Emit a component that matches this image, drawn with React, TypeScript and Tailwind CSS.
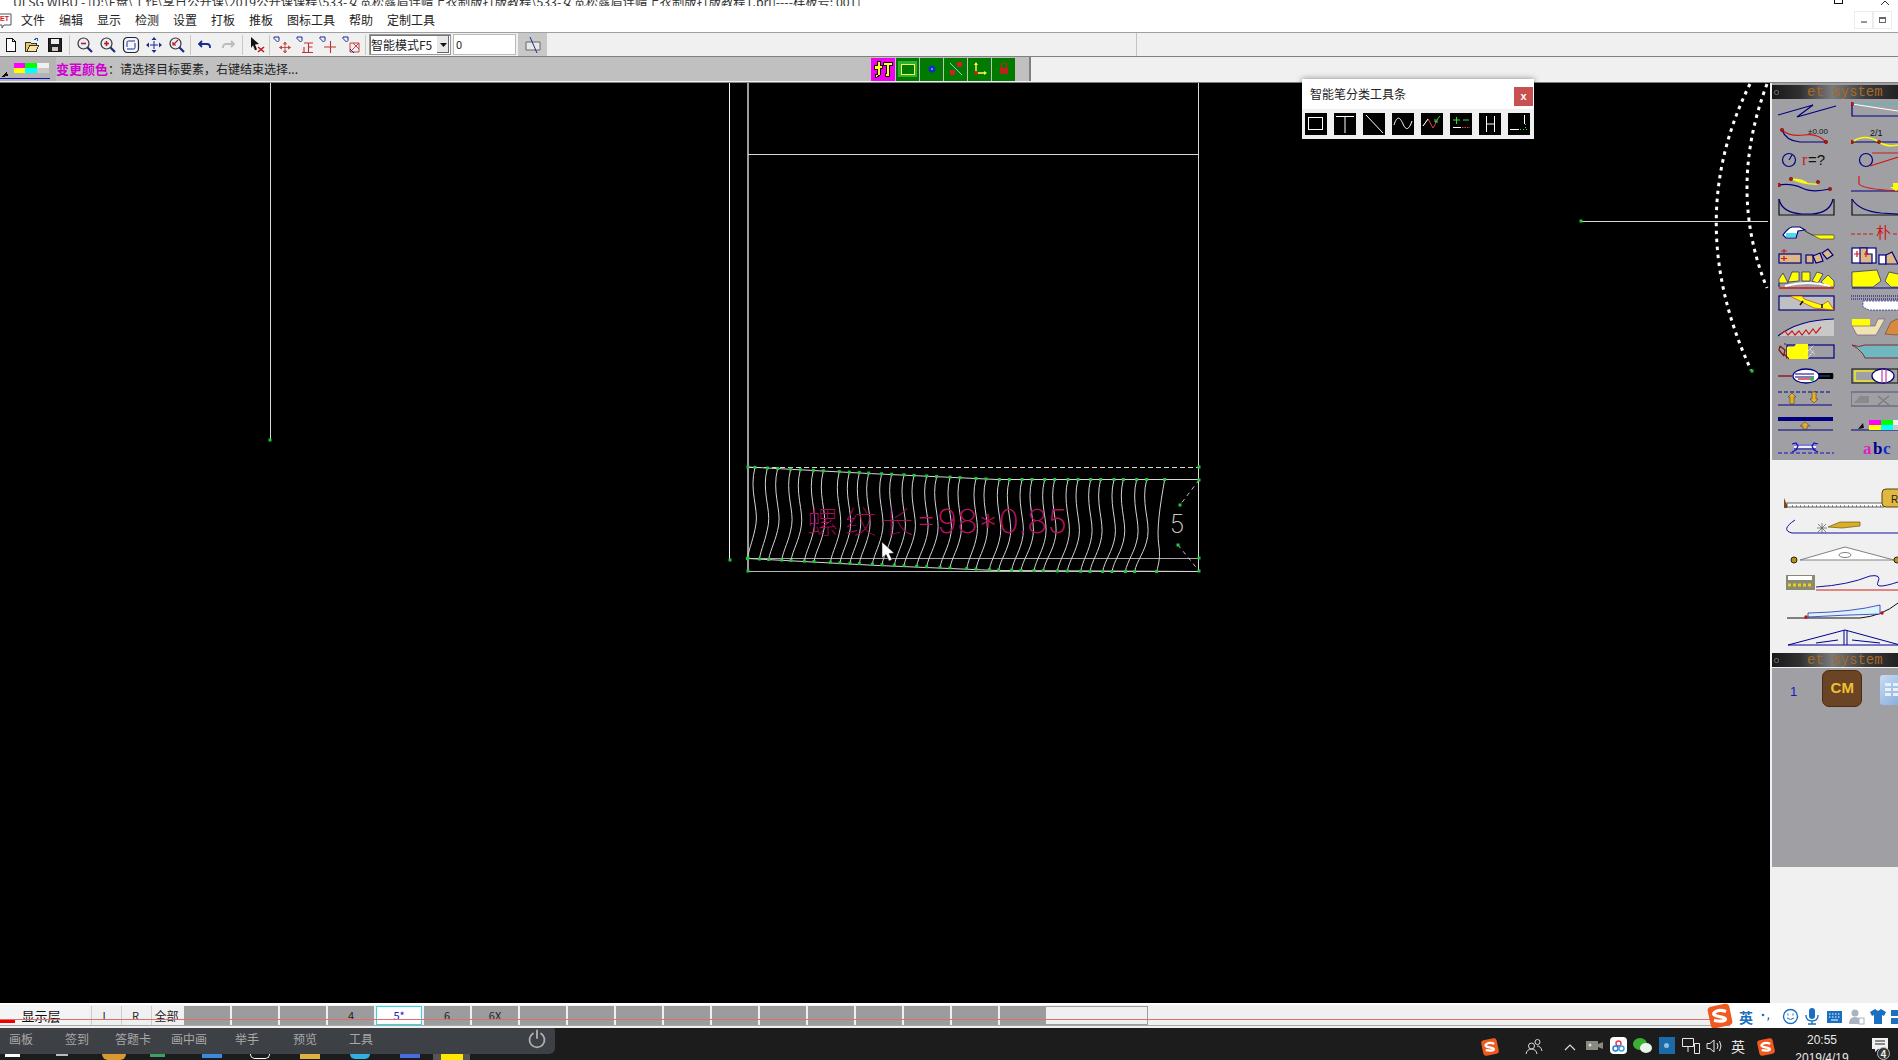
import type { ReactNode } from "react";

const cjk = { fontFamily: '"Noto Sans CJK SC", "Liberation Sans", sans-serif' };

const menus = [
  { label: "文件", w: "w-[38px]" },
  { label: "编辑", w: "w-[38px]" },
  { label: "显示", w: "w-[38px]" },
  { label: "检测", w: "w-[38px]" },
  { label: "设置", w: "w-[38px]" },
  { label: "打板", w: "w-[38px]" },
  { label: "推板", w: "w-[38px]" },
  { label: "图标工具", w: "w-[62px]" },
  { label: "帮助", w: "w-[38px]" },
  { label: "定制工具", w: "w-[62px]" },
];

const Ico = ({ children, w = 16, h = 16 }: { children: ReactNode; w?: number; h?: number }) => (
  <svg width={w} height={h} viewBox={`0 0 ${w} ${h}`} fill="none" shapeRendering="crispEdges">
    {children}
  </svg>
);

const Sep = ({ className = "mx-[3px]" }: { className?: string }) => <div className={`h-[20px] w-px shrink-0 bg-[#c8c8c8] ${className}`} />;

const Btn = ({ children, className = "w-[23px]" }: { children: ReactNode; className?: string }) => (
  <div className={`flex h-full shrink-0 items-center justify-center ${className}`}>{children}</div>
);

const Mag = ({ mark }: { mark: ReactNode }) => (
  <svg width="18" height="18" viewBox="0 0 18 18" fill="none">
    <circle cx="7.5" cy="7.5" r="5.5" stroke="#333" strokeWidth="1.2" fill="#e8eef8" />
    <path d="M11.5 11.5 L16 16" stroke="#1a2a80" strokeWidth="2.2" />
    {mark}
  </svg>
);

const Snap = ({ children }: { children: ReactNode }) => (
  <svg width="18" height="18" viewBox="0 0 18 18" fill="none">
    <path d="M1 1h5v3.5l-1.5 1.5L1 2.5z" stroke="#1a2a90" strokeWidth="1" />
    {children}
  </svg>
);

const Toolbar = () => (
  <div className="flex h-[23px] items-center bg-[#f0f0f0]" style={cjk}>
    <div className="flex h-full w-[1137px] items-center border-r border-[#c4c4c4]">
      <Btn className="w-[21px]">
        <Ico><path d="M3.5 1.5h6l3 3v10h-9z" fill="#fff" stroke="#111" /><path d="M9.5 1.5v3h3" stroke="#111" /></Ico>
      </Btn>
      <Btn className="w-[22px]">
        <Ico>
          <path d="M1 5h5l1 1h5v8H1z" fill="#e8c860" stroke="#333" />
          <path d="M3 14l3-6h9l-3 6z" fill="#f8e8a0" stroke="#333" />
          <path d="M10 3l3-2 1 3" stroke="#1a5fb0" />
        </Ico>
      </Btn>
      <Btn className="w-[23px]">
        <Ico>
          <rect x="1.5" y="1.5" width="13" height="13" fill="#222" stroke="#111" />
          <rect x="4" y="2" width="8" height="5" fill="#eee" />
          <rect x="5" y="10" width="6" height="4" fill="#ccc" />
        </Ico>
      </Btn>
      <Sep />
      <Btn><Mag mark={<path d="M5 7.5h5" stroke="#c01818" strokeWidth="1.6" />} /></Btn>
      <Btn><Mag mark={<path d="M5 7.5h5M7.5 5v5" stroke="#c01818" strokeWidth="1.6" />} /></Btn>
      <Btn>
        <svg width="18" height="18" viewBox="0 0 18 18" fill="none">
          <rect x="1.5" y="1.5" width="15" height="15" rx="4" stroke="#222" strokeWidth="1.2" fill="#f4f6ff" />
          <path d="M5 11V6.5Q5 5 6.5 5H13M13 7v4.5Q13 13 11.5 13H5" stroke="#1a2a90" strokeWidth="1" />
        </svg>
      </Btn>
      <Btn>
        <svg width="18" height="18" viewBox="0 0 18 18" fill="#1a2a90">
          <path d="M9 1l2.5 3h-5zM9 17l-2.5-3h5zM1 9l3-2.5v5zM17 9l-3 2.5v-5z" />
          <path d="M5 8.5h8v1H5zM8.5 5h1v8h-1z" />
        </svg>
      </Btn>
      <Btn>
        <Mag mark={<path d="M10 4L5 9M5 6v3h3" stroke="#c01818" strokeWidth="1.2" />} />
      </Btn>
      <Sep className="mx-[2px]" />
      <Btn>
        <svg width="14" height="12" viewBox="0 0 14 12" fill="none">
          <path d="M4 2L1 5l3 3" stroke="#1a2a90" strokeWidth="1.8" />
          <path d="M1.5 5H9a3 3 0 0 1 3 3v1" stroke="#1a2a90" strokeWidth="1.8" />
        </svg>
      </Btn>
      <Btn>
        <svg width="14" height="12" viewBox="0 0 14 12" fill="none">
          <path d="M10 2l3 3-3 3" stroke="#bcbcbc" strokeWidth="1.8" />
          <path d="M12.5 5H5a3 3 0 0 0-3 3v1" stroke="#bcbcbc" strokeWidth="1.8" />
        </svg>
      </Btn>
      <Sep className="mx-[3px]" />
      <Btn>
        <svg width="18" height="18" viewBox="0 0 18 18">
          <path d="M2 1l8 7-4 .5 2 5-2 .8-2-5L2 12z" fill="#111" />
          <path d="M9 11l6 5M15 11l-6 5" stroke="#c01818" strokeWidth="1.6" />
        </svg>
      </Btn>
      <Sep className="mx-0" />
      <Btn>
        <Snap><path d="M12 6v11M6.500 11.500h11M12 6l-1.500 2h3zM12 17l-1.500-2h3zM6.500 11.500l2-1.500v3zM17.500 11.500l-2-1.500v3z" stroke="#c03030" strokeWidth="0.8" /></Snap>
      </Btn>
      <Btn>
        <Snap><path d="M8 7h9M12.500 7v9M12.500 11h4M8 11v5M6 16.500h11" stroke="#c03030" strokeWidth="1.1" /></Snap>
      </Btn>
      <Btn>
        <Snap><path d="M11.500 5v12M5 11h12" stroke="#c03030" strokeWidth="1.1" /></Snap>
      </Btn>
      <Btn>
        <Snap><path d="M8 7h9v9H8zM8 16l9-9M11 7l6 6" stroke="#c03030" strokeWidth="0.9" /><path d="M8 13l4 4" stroke="#1a2a90" /></Snap>
      </Btn>
      <Sep className="mx-[3px]" />
      <div className="flex h-[21px] w-[82px] shrink-0 items-center justify-between border border-[#9a9a9a] bg-white pl-px pr-px shadow-[inset_1px_1px_0_#777]">
        <span className="whitespace-nowrap text-[12px] leading-none text-[#222]">智能模式F5</span>
        <span className="flex h-[17px] w-[12px] items-center justify-center bg-[#e8e8e8] shadow-[inset_-1px_-1px_0_#666]">
          <svg width="7" height="4" viewBox="0 0 7 4"><path d="M0 0h7L3.500 4z" fill="#111" /></svg>
        </span>
      </div>
      <div className="ml-[2px] flex h-[21px] w-[63px] shrink-0 items-center border border-[#bbb] bg-white pl-[2px] text-[11px] text-[#222]">0</div>
      <div className="ml-[2px] flex h-full w-[29px] shrink-0 items-center justify-center bg-[#c8c8c8]">
        <svg width="18" height="18" viewBox="0 0 18 18" fill="none">
          <path d="M2 6h14v8H2z" fill="#e8e8e8" stroke="#666" />
          <path d="M6 1l7 16" stroke="#1a2a90" />
        </svg>
      </div>
    </div>
  </div>
);

const StatusBar = () => (
  <div className="flex h-[27px] items-stretch border-y border-[#808080] bg-[#f0f0f0] pb-px" style={cjk}>
    <div className="flex w-[1031px] items-center border-r-2 border-[#808080] bg-[#c0c0c0]">
      <div className="flex h-full w-[56px] shrink-0 items-center bg-[#b4b4b4]">
        <svg width="56" height="23" viewBox="0 0 56 23" shapeRendering="crispEdges">
          <path d="M2 19l5-6 1 5zM0 19h3" fill="#111" />
          <rect x="14" y="5" width="11" height="5" fill="#ff00ff" />
          <rect x="25" y="5" width="12" height="5" fill="#00ff00" />
          <rect x="37" y="5" width="12" height="5" fill="#f0f0f0" />
          <rect x="14" y="10" width="11" height="5" fill="#ffff00" />
          <rect x="25" y="10" width="12" height="5" fill="#00ffff" />
          <rect x="37" y="10" width="12" height="5" fill="#c8c8c8" />
          <rect x="0" y="20" width="50" height="1" fill="#1010c0" />
        </svg>
      </div>
      <span className="text-[13px] font-bold text-[#d000d0]">变更颜色</span>
      <span className="whitespace-nowrap text-[12px] text-[#222]">：请选择目标要素，右键结束选择...</span>
      <div className="ml-auto mr-[14px] flex h-[23px] items-stretch gap-px">
        <div className="flex w-[24px] items-center justify-center bg-[#f000f0]">
          <svg width="20" height="20" viewBox="0 0 20 20" shapeRendering="crispEdges">
            <path d="M1 6h3V2h3v4h2v3H7v7l-3 2H2v-3h2V10H1zM10 3h9v3h-3v11h-4v-3h1V6h-3z" fill="#ffff30" stroke="#111" />
          </svg>
        </div>
        <div className="flex w-[23px] items-center justify-center bg-[#007a00]">
          <div className="flex h-[16px] w-[19px] items-center justify-center bg-[#30b030]">
            <div className="h-[11px] w-[14px] border border-[#ffff40] bg-[#007a00]" />
          </div>
        </div>
        <div className="flex w-[23px] items-center justify-center bg-[#007a00]">
          <svg width="8" height="8" viewBox="0 0 8 8"><circle cx="4" cy="4" r="3.500" fill="#1030c0" /><circle cx="4" cy="4" r="1" fill="#70b0ff" /></svg>
        </div>
        <div className="flex w-[23px] items-center justify-center bg-[#007a00]">
          <svg width="14" height="14" viewBox="0 0 14 14">
            <path d="M1 1l12 12" stroke="#60e0e0" />
            <rect x="8" y="0" width="5" height="5" fill="#d02020" />
            <rect x="1" y="8" width="5" height="5" fill="#d02020" />
          </svg>
        </div>
        <div className="flex w-[23px] items-center justify-center bg-[#007a00]">
          <svg width="14" height="14" viewBox="0 0 14 14">
            <path d="M3 11V3M3 11h8" stroke="#ffff40" strokeWidth="1.400" />
            <path d="M3 0l2 3H1zM14 11l-3 2V9z" fill="#ffff40" />
            <circle cx="3" cy="11" r="2" fill="#c02020" />
          </svg>
        </div>
        <div className="flex w-[23px] items-center justify-center bg-[#007a00]">
          <svg width="10" height="12" viewBox="0 0 10 12">
            <rect x="1" y="5" width="8" height="6" fill="#c02020" />
            <path d="M2.500 5V2.500a2.500 2.500 0 0 1 5 0V5" stroke="#c02020" strokeWidth="1.400" fill="none" />
          </svg>
        </div>
      </div>
    </div>
  </div>
);

const waveTop = [75, 112, 143, 182, 211, 250, 280, 328, 358, 388, 416, 455, 485, 522, 552, 590, 620, 660, 690, 738, 768, 808, 838, 876, 906, 944, 974, 1014, 1044, 1082, 1112, 1152, 1180, 1220, 1250, 1304];
const waveBottom = [52, 88, 116, 155, 183, 223, 252, 301, 330, 360, 388, 427, 456, 493, 522, 560, 590, 630, 660, 710, 738, 778, 806, 845, 873, 912, 940, 982, 1012, 1052, 1080, 1118, 1146, 1186, 1214, 1280];

// zoom crop pixels to full picture pixels
const zx = (v: number) => 730 + v / 3;

const topEdge = (x: number) => {
  if (x < 997) return 467 + (12.500 * (x - 748)) / 249;
  return 479.500;
};
const bottomEdge = (x: number) => {
  if (x < 997) return 558.500 + (11.500 * (x - 748)) / 249;
  return Math.min(571.500, 570 + (1.500 * (x - 997)) / 100);
};

const Dot = ({ x, y }: { x: number; y: number }) => <rect x={x - 1.500} y={y - 1.500} width="3" height="3" fill="#22c83a" />;

const Drawing = () => (
  <svg className="block" width="1770" height="920" viewBox="0 83 1770 920" fill="none">
    <g stroke="#d4dcd4" strokeWidth="1" shapeRendering="crispEdges">
      <path d="M270.500 83V440" />
      <path d="M729.500 83V560" stroke="#f4f4f4" />
      <path d="M748 83V572" stroke="#9c9c9c" strokeWidth="2" />
      <path d="M1198.500 83V572" />
      <path d="M748 154.500H1199" />
      <path d="M748 467.500H1199" strokeDasharray="5 3" />
      <path d="M748 558.500H1199" stroke="#a8a8a8" />
      <path d="M748 571.500H1199" stroke="#b8b8b8" />
      <path d="M1581 221.500H1768" />
    </g>
    <path d="M748 467Q870 474 997 479.500H1199" stroke="#d8d8d8" />
    <path d="M748 558.500Q873 566 997 570.500L1199 571.500" stroke="#d8d8d8" />
    {waveTop.map((t, i) => {
      const tx = zx(t);
      const bx = zx(waveBottom[i]);
      const ty = topEdge(tx);
      const by = bottomEdge(bx);
      const h = by - ty;
      const last = i === waveTop.length - 1;
      const d = last
        ? `M${tx} ${ty}C${tx - 5} ${ty + h * 0.3} ${tx - 8} ${ty + h * 0.55} ${tx - 6} ${ty + h * 0.7}S${bx + 2} ${by - 8} ${bx} ${by}`
        : `M${tx} ${ty}C${tx - 6} ${ty + h * 0.25} ${tx + 3.5} ${ty + h * 0.45} ${tx + 1} ${ty + h * 0.62}S${bx + 2} ${by - h * 0.12} ${bx} ${by}`;
      return <path key={t} d={d} stroke="#d4d4d4" strokeWidth="1" />;
    })}
    <text x="807 845 882" y="533" fill="#a80c58" fontSize="31" style={{ fontFamily: '"Noto Sans CJK SC", sans-serif', fontWeight: 100 }}>螺纹长</text>
    <text x="915" y="533" fill="#b8105f" fontSize="33" textLength="152" lengthAdjust="spacingAndGlyphs" style={{ fontFamily: "Inter, sans-serif", fontWeight: 200 }}>=98*0.85</text>
    <text x="1170" y="533" fill="#c8c8c8" fontSize="25" style={{ fontFamily: "Inter, sans-serif", fontWeight: 200 }}>5</text>
    <path d="M1199 480L1180 505M1178 545L1199 571" stroke="#c0c0c0" strokeDasharray="4 4" />
    <path d="M1750 84Q1682 221 1751 370" stroke="#fff" strokeWidth="3" strokeDasharray="3.500 4.500" />
    <path d="M1767 84Q1727 190 1767 288" stroke="#fff" strokeWidth="3" strokeDasharray="3.500 4.500" />
    {waveTop.map((t) => <Dot key={t} x={zx(t)} y={topEdge(zx(t))} />)}
    {waveBottom.map((b) => <Dot key={b} x={zx(b)} y={bottomEdge(zx(b))} />)}
    <Dot x={270} y={440} />
    <Dot x={730} y={560} />
    <Dot x={748} y={467} />
    <Dot x={748} y={558} />
    <Dot x={748} y={571} />
    <Dot x={1199} y={467} />
    <Dot x={1199} y={480} />
    <Dot x={1199} y={558} />
    <Dot x={1199} y={571} />
    <Dot x={1180} y={505} />
    <Dot x={1178} y={545} />
    <Dot x={1581} y={221} />
    <Dot x={1752} y={371} />
    <path d="M882 542V558L886 554.500 889 561 892 559.500 889 553.500 894 553Z" fill="#fff" stroke="#222" strokeWidth="0.500" />
  </svg>
);

const penIcons: ReactNode[] = [
  <rect key="r" x="3.500" y="4.500" width="14" height="12" stroke="#fff" />,
  <path key="t" d="M2 3.500H20M11 3.500V20" stroke="#fff" />,
  <path key="l" d="M3 2L20 20" stroke="#fff" />,
  <path key="w" d="M2 12C5 2 8 4 11 11S17 17 20 8" stroke="#fff" />,
  <g key="s"><path d="M2 13L7 6 12 15 17 6" stroke="#e04040" /><path d="M2 13L7 6" stroke="#fff" /><path d="M14 9L19 3M14 9h3M14 9V6" stroke="#30e040" /></g>,
  <g key="p"><path d="M3 7h7M6.500 4v7M13 7h6" stroke="#30e040" /><path d="M3 14.500H11" stroke="#fff" /><path d="M12 14.500H20" stroke="#e04040" strokeDasharray="1.500 1" /></g>,
  <path key="h" d="M7.500 3V19M15.500 3V19M7.500 11H15.500" stroke="#fff" />,
  <g key="c"><path d="M2 16.500H11" stroke="#fff" /><path d="M16.500 2V11" stroke="#fff" /><path d="M12 16.500H19M17.500 11V16" stroke="#30e040" strokeDasharray="1 2" /></g>,
];

const PenPalette = () => (
  <div className="absolute left-[1302px] top-[-4px] w-[232px] shadow-[0_0_6px_rgba(0,0,0,0.45)]" style={cjk}>
    <div className="flex h-[30px] items-center justify-between bg-white pl-[8px] pr-px">
      <span className="text-[12px] text-[#222]">智能笔分类工具条</span>
      <span className="mt-[4px] flex h-[19px] w-[19px] items-center justify-center bg-[#c75050] text-[11px] font-bold leading-none text-white" style={{ fontFamily: '"Liberation Sans", sans-serif' }}>x</span>
    </div>
    <div className="flex h-[30px] items-center gap-[7px] bg-[#f0f0f0] pl-[3px]">
      {penIcons.map((icon, i) => (
        <div key={i} className="h-[22px] w-[22px] bg-black">
          <svg width="22" height="22" viewBox="0 0 22 22" fill="none">{icon}</svg>
        </div>
      ))}
    </div>
  </div>
);

const N = "#000080";
const R = "#d01818";
const Y = "#ffff00";
const TAN = "#deb887";
const RDot = ({ x, y }: { x: number; y: number }) => <circle cx={x} cy={y} r="1.700" fill="#c01010" stroke="#600" strokeWidth="0.500" />;

// one pair per row, left column then the right column that runs off the panel
const rows: [ReactNode, ReactNode][] = [
  [
    <path d="M0 14L35 4 19 16 58 5" stroke={N} />,
    <g><path d="M1 3H60" stroke="#00d8d8" strokeDasharray="4 2" /><path d="M1 3L60 12" stroke="#fff" /><path d="M1 3V15H60" stroke={N} /><RDot x={1} y={3} /></g>,
  ],
  [
    <g><path d="M4 5Q8 16 22 17H48" stroke={N} /><path d="M4 5Q12 12 26 10T48 17" stroke={R} /><RDot x={4} y={5} /><RDot x={48} y={17} /><text x="30" y="9" fontSize="8" fill="#111" style={{ fontFamily: '"Liberation Sans", sans-serif' }}>±0.00</text></g>,
    <g><path d="M1 17H60" stroke={N} /><path d="M1 17Q14 8 28 17T60 14" stroke={Y} strokeWidth="1.500" /><RDot x={1} y={17} /><RDot x={28} y={17} /><text x="19" y="11" fontSize="9" fill="#111" style={{ fontFamily: '"Liberation Sans", sans-serif' }}>2/1</text></g>,
  ],
  [
    <g><circle cx="11" cy="11" r="6.500" stroke={N} /><path d="M11 11L14 6" stroke={N} /><text x="24" y="16" fontSize="16" fill={R} style={{ fontFamily: '"Liberation Serif", serif' }}>r</text><text x="30" y="16" fontSize="15" fill="#111" style={{ fontFamily: '"Liberation Sans", sans-serif' }}>=?</text></g>,
    <g><circle cx="15" cy="11" r="6.500" stroke={N} /><path d="M21 4H60M19 17L60 4" stroke={R} /></g>,
  ],
  [
    <g><path d="M0 12Q14 10 24 15T52 16" stroke={N} /><path d="M13 6Q26 6 30 11H40Q28 12 13 6Z" fill={Y} stroke={Y} /><RDot x={1} y={12} /><RDot x={13} y={6} /><RDot x={40} y={9} /><RDot x={52} y={16} /></g>,
    <g><path d="M0 18H60" stroke={N} /><path d="M8 3V11Q12 16 46 18" stroke={R} /><path d="M42 10h6v4h3l-6 4-6-4h3z" fill={Y} /></g>,
  ],
  [
    <g><path d="M1 2V18H56V2" stroke="#111" /><path d="M1 2Q4 16 24 17H34Q52 16 55 2" stroke={N} /></g>,
    <g><path d="M1 2V18H60" stroke="#111" /><path d="M1 2Q8 14 30 16L60 18" stroke={N} /></g>,
  ],
  [
    <g><path d="M5 14Q10 7 14 6H22L27 9 20 10 18 17H8Z" fill="#fff" stroke={N} /><path d="M8 12h10v4H8z" fill="#40e0f0" /><path d="M27 10L34 14H56V18H42Z" fill={Y} stroke="#111" strokeWidth="0.500" /></g>,
    <g><path d="M0 13H60" stroke={R} strokeDasharray="4 2" /><rect x="24" y="2" width="16" height="18" fill="#a0a0a4" /><text x="25" y="17" fontSize="15" fill={R} style={cjk}>朴</text></g>,
  ],
  [
    <g><rect x="1" y="9" width="22" height="9" fill={TAN} stroke={N} /><path d="M6 4v4M3 6h6M6 11v5M3 13.500h6" stroke={R} /><rect x="28" y="10" width="7" height="8" fill={TAN} stroke={N} /><path d="M35 11l7-3 3 8-7 2z" fill={TAN} stroke={N} /><path d="M44 8l6-4 5 6-6 4z" fill={TAN} stroke={N} /></g>,
    <g><rect x="1" y="3" width="24" height="15" fill="#fff" stroke={N} /><path d="M9 3h7v6h5v9H9z" fill={TAN} stroke={N} /><path d="M3 9h6M6 6v6M13 9h5M15 6v6" stroke={R} /><rect x="28" y="10" width="7" height="9" fill="#fff" stroke={N} /><path d="M35 10l6-3 6 12H35z" fill={TAN} stroke={N} /></g>,
  ],
  [
    <g><path d="M1 18V10L5 4 10 14H1zM10 13L14 3H21V12zM24 3H32V12H24zM34 12L39 3 45 5 40 14zM43 13L50 6 56 12V18H50Z" fill={Y} stroke={N} strokeWidth="0.600" /><path d="M7 17Q30 11 52 17" stroke="#fff" strokeWidth="2" /><path d="M1 19H56" stroke={R} strokeWidth="1.500" /></g>,
    <g><path d="M1 3L26 1 30 12 22 18H1ZM34 12L38 3 60 8V18H40Z" fill={Y} stroke={N} strokeWidth="0.600" /><path d="M1 19H60" stroke={N} /></g>,
  ],
  [
    <g><rect x="1" y="3" width="55" height="14" fill="#c0c0c0" stroke={N} /><path d="M12 3L36 15 56 17 50 8 44 12 26 6 24 3Z" fill={Y} stroke="#c02020" strokeWidth="0.600" /><path d="M25 8l-3 4M44 11v4" stroke="#111" strokeWidth="1.500" /></g>,
    <g><path d="M0 3H60" stroke={N} strokeDasharray="1 1" /><path d="M0 6H60" stroke={N} strokeDasharray="1 1" /><path d="M12 8H60V17H18L12 14Z" fill="#fff" stroke={N} strokeDasharray="2 1" strokeWidth="0.600" /></g>,
  ],
  [
    <g><path d="M0 19Q20 3 56 2V19Z" fill="#c8c8c8" /><path d="M0 19Q20 3 56 2" stroke={N} /><path d="M3 17l4-3 3 4 4-4 3 4 4-4 3 4 4-5 3 4 4-5 3 4 5-6" stroke={R} /></g>,
    <g><rect x="1" y="2" width="18" height="7" fill={Y} /><path d="M1 9H24L27 2H34L25 18H6Z" fill="#efe3b0" stroke="#6a4a90" strokeWidth="0.600" /><path d="M34 17L40 5 46 2 60 6V18L52 12 46 18Z" fill="#d88a40" stroke="#6a4020" strokeWidth="0.600" /></g>,
  ],
  [
    <g><rect x="9" y="4" width="47" height="13" stroke={N} /><path d="M9 6H16L18 3H30V18H9Z" fill={Y} /><path d="M2 5l5 4-1 4 5 5M2 5l-1 4 5 6M6 3h2" stroke="#801010" strokeWidth="1.200" /><path d="M26 14l10-10M30 17l6-8M32 8l5 6" stroke="#fff" strokeWidth="1" strokeDasharray="1 1" /></g>,
    <g><path d="M1 4Q8 7 14 4H60V17H14L12 13Q6 6 1 4Z" fill="#70b8c0" stroke="#7a1010" strokeWidth="0.800" /></g>,
  ],
  [
    <g><path d="M0 11H14" stroke="#800000" /><path d="M38 8H55Q56 11 55 14H38Z" fill="#000" /><path d="M38 11H52" stroke="#205080" /><ellipse cx="28" cy="11" rx="13" ry="7" fill="#fff" stroke={N} strokeWidth="1.300" /><path d="M17 9H36M17 12H36" stroke={N} /><path d="M20 14H34" stroke={R} strokeWidth="1.300" /><circle cx="34" cy="14" r="2" fill="#30c040" /></g>,
    <g><rect x="1" y="4" width="46" height="14" fill="#a0a0a4" stroke="#222" /><rect x="4" y="6" width="22" height="10" stroke={Y} /><ellipse cx="32" cy="11" rx="11" ry="7" fill="#fff" stroke={N} strokeWidth="1.300" /><path d="M31 4V18M35 4V18" stroke="#c040a0" /></g>,
  ],
  [
    <g><path d="M0 3H54" stroke={N} strokeDasharray="4 2" /><path d="M0 16H54" stroke={N} /><path d="M14 4l4 4h-2v7h-4V8h-2z" fill="#e8b020" stroke="#333" strokeWidth="0.500" /><path d="M36 14l-4-4h2V3h4v7h2z" fill="#e8b020" stroke="#333" strokeWidth="0.500" /></g>,
    <g><rect x="0" y="3" width="60" height="14" stroke="#606080" /><path d="M3 14L9 7H18V14Z" fill="#8a8a8a" /><path d="M27 7l11 9M38 7L27 16" stroke="#7a7a7a" /><path d="M48 4V16" stroke="#7a7a7a" /></g>,
  ],
  [
    <g><rect x="0" y="4" width="55" height="4" fill={N} /><path d="M0 17H55" stroke={N} /><path d="M27 9l5 4h-3v3h-4v-3h-3z" fill="#e8b020" stroke="#333" strokeWidth="0.500" /></g>,
    <g><path d="M7 16l5-6 1 5zM5 16h5" fill="#111" /><path d="M0 17H60" stroke={N} /><rect x="18" y="7" width="12" height="5" fill="#ff00ff" /><rect x="30" y="7" width="12" height="5" fill="#00ff00" /><rect x="42" y="7" width="12" height="5" fill="#f0f0f0" /><rect x="18" y="12" width="12" height="5" fill="#ffff00" /><rect x="30" y="12" width="12" height="5" fill="#00ffff" /><rect x="42" y="12" width="12" height="5" fill="#c8c8c8" /></g>,
  ],
  [
    <g><path d="M0 16H56" stroke="#1010c0" strokeDasharray="4 2" /><path d="M16 9H38" stroke="#f0f0f0" strokeWidth="4" /><path d="M16 8H38M16 12H38" stroke="#1010c0" /><path d="M14 7l4-1 2 3-2 4-4 2M40 7l-4-1-2 3 2 4 4 2" stroke="#1010c0" /></g>,
    <g style={{ fontFamily: '"Liberation Serif", serif', fontWeight: 700, fontSize: 17 }}><text x="12" y="17" fill="#e020c0">a</text><text x="22" y="17" fill="#000090">b</text><text x="32" y="17" fill="#1030d0">c</text></g>,
  ],
];

const SystemHeader = () => (
  <div className="relative flex h-[14px] items-center bg-[linear-gradient(90deg,#181818_0%,#303030_22%,#7a7a7a_48%,#3a3a3a_75%,#222_100%)] pl-[3px]">
    <span className="h-[3px] w-[3px] rounded-full bg-[#111] ring-1 ring-[#666]" />
    <span className="ml-[29px] text-[14px] leading-none text-[#a86a28]" style={{ fontFamily: '"Liberation Mono", monospace' }}>et system</span>
  </div>
);

const RulerTools = () => (
  <svg className="block" width="126" height="193" viewBox="0 0 126 193" fill="none">
    <g transform="translate(0 -460)">
      <path d="M12 498l3 7v3h-3z" fill="#7a4a20" />
      <rect x="15" y="503" width="97" height="4" fill="#fff" stroke="#222" strokeWidth="0.700" />
      <path d="M20 506H112" stroke="#222" strokeDasharray="1 3" />
      <rect x="110" y="489" width="20" height="18" rx="4" fill="#e0b840" stroke="#5a4010" />
      <text x="119" y="503" fontSize="10" fill="#222" style={{ fontFamily: '"Liberation Sans", sans-serif' }}>R</text>
      <path d="M23 520Q8 530 20 533L32 533H128" stroke="#1010a0" />
      <path d="M56 527L68 522H88V526L70 528Z" fill="#d8b028" stroke="#7a5010" strokeWidth="0.700" />
      <path d="M46 524l8 8M54 524l-8 8M50 523v10M45 528h10" stroke="#555" strokeWidth="0.700" />
      <path d="M28 560L73 547 122 560Z" fill="#fff" stroke="#808080" />
      <ellipse cx="73" cy="555" rx="6" ry="2.500" stroke="#808080" />
      <circle cx="22" cy="560" r="3" fill="#c09010" stroke="#222" />
      <circle cx="125" cy="560" r="3" fill="#c09010" stroke="#222" />
      <rect x="14" y="575" width="29" height="15" fill="#8a8a70" />
      <rect x="16" y="576" width="24" height="4" fill="#fff" />
      <path d="M16 585H40" stroke="#e8d020" strokeWidth="3" strokeDasharray="3 2" />
      <path d="M44 587Q76 585 98 576Q110 574 106 582T126 582" stroke="#1010a0" />
      <path d="M44 590H126" stroke="#d01818" />
      <path d="M15 618H88Q110 616 126 603" stroke="#111" />
      <path d="M36 613Q80 612 108 605V614Q70 615 36 617Z" fill="#d8f4ff" stroke="#1010a0" strokeWidth="0.700" />
      <circle cx="34" cy="617" r="1.700" fill="#c01010" />
      <circle cx="110" cy="613" r="1.700" fill="#c01010" />
      <path d="M16 645L73 630 128 645ZM72 630V645M75 630V645M44 643L66 640M80 640L108 643" stroke="#000090" />
    </g>
  </svg>
);

const RightPanel = () => (
  <div className="flex w-[128px] shrink-0 flex-col overflow-hidden border-l-2 border-[#f0f0f0] bg-[#f0f0f0]">
    <div className="h-[377px] bg-[#a0a0a4] pt-[2px]">
      <SystemHeader />
      <div className="flex flex-col pt-px">
        {rows.map(([a, b], i) => (
          <div key={i} className="flex h-[24px] items-center pl-[6px]">
            <svg className="shrink-0" width="60" height="22" viewBox="0 0 60 22" fill="none" strokeWidth="1.200">{a}</svg>
            <svg className="ml-[13px] shrink-0" width="60" height="22" viewBox="0 0 60 22" fill="none" strokeWidth="1.200">{b}</svg>
          </div>
        ))}
      </div>
    </div>
    <div className="h-[193px]"><RulerTools /></div>
    <SystemHeader />
    <div className="flex h-[200px] items-start border-t border-[#f0f0f0] bg-[#a0a0a4] pl-[18px] pt-[2px]">
      <span className="mt-[15px] text-[13px] leading-none text-[#1818c0]" style={{ fontFamily: '"Liberation Sans", sans-serif' }}>1</span>
      <div className="ml-[25px] flex h-[37px] w-[40px] shrink-0 items-center justify-center rounded-[7px] border border-[#4a2c10] bg-[#6a4424] text-[15px] font-bold text-[#f0c030]" style={{ fontFamily: '"Liberation Sans", sans-serif' }}>CM</div>
      <div className="ml-[18px] mt-[5px] h-[30px] w-[30px] shrink-0 rounded-[3px] bg-[linear-gradient(135deg,#c8dcf4,#7aa4d8)]">
        <div className="ml-[5px] mt-[8px] grid w-[20px] grid-cols-3 gap-[2px]">
          <div className="h-[3px] bg-[#e8f0fa]" /><div className="h-[3px] bg-[#e8f0fa]" /><div className="h-[3px] bg-[#e8a070]" />
          <div className="h-[3px] bg-[#e8f0fa]" /><div className="h-[3px] bg-[#e8f0fa]" /><div className="h-[3px] bg-[#e8f0fa]" />
          <div className="h-[3px] bg-[#e8f0fa]" /><div className="h-[3px] bg-[#e8f0fa]" /><div className="h-[3px] bg-[#e8f0fa]" />
        </div>
      </div>
    </div>
  </div>
);

const layerCells = ["", "", "", "4", "5*", "6", "6X", "", "", "", "", "", "", "", "", "", "", ""];

const BottomBar = () => (
  <div className="relative flex h-[25px] border-t-2 border-white bg-[#f0f0f0] pb-[2px] pt-[1px]" style={cjk}>
    <div className="flex flex-1 items-stretch border-b border-[#a8a8a8]">
      <div className="relative flex w-[89px] items-center justify-center bg-[#f4f4f4] pb-px pr-[7px] text-[13px] leading-none text-[#111]">
        显示层
        <span className="absolute bottom-[2px] left-0 h-[4px] w-[15px] bg-[#f00000]" />
      </div>
      <div className="ml-[2px] flex w-[28px] items-center justify-center border-l border-[#ccc] text-[11px] text-[#222]">L</div>
      <div className="ml-[2px] flex w-[28px] items-center justify-center border-l border-[#ccc] text-[11px] text-[#222]">R</div>
      <div className="ml-[2px] flex w-[30px] items-center justify-center border-l border-[#ccc] text-[12px] text-[#222]">全部</div>
      <div className="ml-[3px] flex gap-[2px]">
        {layerCells.map((c, i) =>
          c === "5*" ? (
            <div key={i} className="flex w-[46px] items-center justify-center border border-[#30d8d8] bg-white text-[11px] text-[#2020c0]">{c}</div>
          ) : (
            <div key={i} className="flex w-[46px] items-center justify-center bg-[#9c9c9c] text-[11px] text-[#222]">{c}</div>
          )
        )}
      </div>
      <div className="w-[102px] border-y border-r border-[#9c9c9c] bg-[#f0f0f0]" />
    </div>
    <div className="absolute inset-x-0 top-[14px] h-px bg-[#d87070]" />
    <SogouBar />
  </div>
);

const SogouS = ({ size }: { size: number }) => (
  <svg width={size} height={size} viewBox="0 0 28 28">
    <rect x="3" y="3" width="22" height="22" rx="4" fill="#f05a1e" transform="rotate(-12 14 14)" />
    <path d="M20 9.500Q13 7 9 10T13 14.500 19 18 8 18.500" stroke="#fff" strokeWidth="3.200" fill="none" />
  </svg>
);

const SogouBar = () => (
  <div className="absolute bottom-[-1px] right-0 top-[-1px] flex w-[168px] items-center bg-white pl-[6px]">
    <div className="absolute left-[-24px] top-[-2px]"><SogouS size={28} /></div>
    <span className="ml-[3px] text-[14px] font-bold leading-none text-[#1a6fc0]">英</span>
    <svg className="ml-[7px] shrink-0" width="12" height="12" viewBox="0 0 12 12" fill="#1a6fc0"><circle cx="3" cy="4" r="1.300" /><path d="M9 6q1 3-2 4 1.500-1.500 .5-3z" /></svg>
    <svg className="ml-[9.500px] shrink-0" width="17" height="17" viewBox="0 0 17 17" fill="none" stroke="#1a6fc0"><circle cx="8.500" cy="8.500" r="7" strokeWidth="1.400" /><path d="M5 10q3.500 3 7 0M6 5.500v2M11 5.500v2" /></svg>
    <svg className="ml-[6.500px] shrink-0" width="14" height="17" viewBox="0 0 14 17" fill="#1a6fc0"><rect x="4" y="0" width="6" height="11" rx="3" /><path d="M1 7q0 6 6 6t6-6M7 13v3M3 16h8" fill="none" stroke="#1a6fc0" strokeWidth="1.400" /></svg>
    <svg className="ml-[6.500px] shrink-0" width="17" height="14" viewBox="0 0 17 14" fill="#1a6fc0"><path d="M1 1h15v12H1z" /><path d="M3 4h1.500M6 4h1.500M9 4h1.500M12 4h1.500M3 7h1.500M6 7h1.500M9 7h1.500M12 7h1.500M5 10h7" stroke="#fff" /></svg>
    <svg className="ml-[6.500px] shrink-0" width="16" height="16" viewBox="0 0 16 16" fill="#a8b4c0"><circle cx="6" cy="4" r="3.500" /><path d="M0 15q0-7 6-7t6 7z" /><rect x="10" y="9" width="5" height="6" fill="#fff" stroke="#a8b4c0" /></svg>
    <svg className="ml-[5px] shrink-0" width="16" height="15" viewBox="0 0 16 15" fill="#1a6fc0"><path d="M5 0L0 3l2 4 2-1v9h8V6l2 1 2-4-5-3-3 2z" /></svg>
    <svg className="ml-[5px] shrink-0" width="8" height="14" viewBox="0 0 8 14" fill="#1a6fc0"><rect width="8" height="6" /><rect y="8" width="8" height="6" /></svg>
  </div>
);

const meetingItems = [
  { label: "画板", w: "w-[56px]" },
  { label: "签到", w: "w-[50px]" },
  { label: "答题卡", w: "w-[56px]" },
  { label: "画中画", w: "w-[64px]" },
  { label: "举手", w: "w-[58px]" },
  { label: "预览", w: "w-[56px]" },
  { label: "工具", w: "w-[30px]" },
];

const MeetingBar = () => (
  <div className="absolute bottom-[6px] left-0 z-10 flex h-[29px] w-[555px] items-center rounded-r-[6px] bg-[#3d4045] pb-[2px] pl-[9px] text-[12px] text-[#a8a8a8]" style={cjk}>
    {meetingItems.map((m) => (
      <span key={m.label} className={`shrink-0 whitespace-nowrap ${m.w}`}>{m.label}</span>
    ))}
    <svg className="absolute left-[527px] top-[4px]" width="20" height="20" viewBox="0 0 20 20" fill="none" stroke="#b0b0b0" strokeWidth="1.800" strokeLinecap="round">
      <path d="M6 4.500a7.500 7.500 0 1 0 8 0M10 1.500V9" />
    </svg>
  </div>
);

const Taskbar = () => (
  <div className="relative h-[32px] overflow-hidden bg-[#1c1c1c] text-[#e8e8e8]" style={cjk}>
    <MeetingBar />
    <div className="absolute bottom-0 left-0 flex h-[6px] items-start">
      <span className="ml-[5px] h-[3px] w-[15px] bg-white" />
      <span className="ml-[36px] h-[2px] w-[12px] bg-[#bbb]" />
      <span className="ml-[34px] h-[6px] w-[24px] rounded-b-[6px] bg-[#d89a30]" />
      <span className="ml-[24px] h-[3px] w-[15px] bg-[#3ca060]" />
      <span className="ml-[37px] h-[4px] w-[20px] bg-[#3a8ae0]" />
      <span className="ml-[28px] h-[5px] w-[20px] rounded-b-full border border-t-0 border-white" />
      <span className="ml-[30px] h-[5px] w-[20px] bg-[#e0b040]" />
      <span className="ml-[30px] h-[5px] w-[20px] rounded-b-full bg-[#30b0e0]" />
      <span className="ml-[30px] h-[4px] w-[20px] bg-[#4a6ae0]" />
      <span className="ml-[13px] flex h-[6px] w-[37px] justify-center bg-[#555]"><span className="h-[6px] w-[22px] bg-[#ffe800]" /></span>
    </div>
    <div className="flex h-full items-start justify-end pt-[9px]">
      <div className="mr-[25px]"><SogouS size={20} /></div>
      <svg className="mr-[21px] mt-[1px]" width="18" height="18" viewBox="0 0 18 18" fill="none" stroke="#ddd"><circle cx="6.500" cy="8" r="3" /><circle cx="12.500" cy="4" r="2.500" /><path d="M1 16q1-5 5.500-5t5.500 5M12 8q4 0 5 5" /></svg>
      <svg className="mr-[10px] mt-[6px]" width="12" height="8" viewBox="0 0 12 8" fill="none" stroke="#ddd" strokeWidth="1.200"><path d="M1 7l5-5 5 5" /></svg>
      <svg className="mr-[7px] mt-[2px]" width="17" height="13" viewBox="0 0 17 13" fill="#8a8a80"><rect x="0" y="2" width="12" height="9" /><path d="M12 5l5-2v7l-5-2z" /><circle cx="4" cy="6" r="1.500" fill="#ddd" /></svg>
      <div className="mr-[6px] flex h-[17px] w-[17px] items-center justify-center rounded-[4px] bg-white">
        <svg width="13" height="12" viewBox="0 0 13 12" fill="none" strokeWidth="1.500"><circle cx="6.500" cy="3.500" r="2.500" stroke="#e04060" /><circle cx="3.500" cy="8.500" r="2.500" stroke="#2080e0" /><circle cx="9.500" cy="8.500" r="2.500" stroke="#40a0e0" /></svg>
      </div>
      <svg className="mr-[6.500px] mt-px" width="19" height="16" viewBox="0 0 19 16" fill="#3cb034"><ellipse cx="7" cy="6" rx="7" ry="6" /><ellipse cx="13" cy="10" rx="6" ry="5" fill="#e8f4e8" /></svg>
      <div className="mr-[7px] flex h-[17px] w-[16px] items-center justify-center bg-[#1c6aa8]"><span className="h-[5px] w-[5px] rounded-full bg-[#8ac0e8]" /></div>
      <svg className="mr-[6px] mt-[1px]" width="18" height="16" viewBox="0 0 18 16" fill="none" stroke="#e8e8e8"><path d="M.5.500h11v8H.5zM6 8.500V14M12.500 5.500h5v10h-5z" /></svg>
      <svg className="mr-[8.500px] mt-[1px]" width="17" height="16" viewBox="0 0 17 16" fill="none" stroke="#e8e8e8"><path d="M1 5.500h3L8 2v12l-4-3.500H1zM11 5q2 3 0 6M13.500 3q3 5 0 10" /></svg>
      <span className="mr-[11px] text-[14px] leading-[18px]">英</span>
      <div className="mr-[11px]"><SogouS size={20} /></div>
      <div className="mr-[15px] -mt-[6px] flex w-[70px] flex-col items-center text-[12px] leading-[18px]" style={{ fontFamily: '"Liberation Sans", sans-serif' }}>
        <span>20:55</span>
        <span className="whitespace-nowrap">2019/4/19</span>
      </div>
      <div className="relative mr-[10px] mt-[1px]">
        <svg width="16" height="15" viewBox="0 0 16 15" fill="#f0f0f0"><path d="M0 0h16v11H6l-3 3v-3H0z" /><path d="M3 3h10M3 6h10" stroke="#222" /></svg>
        <span className="absolute left-[5px] top-[9px] flex h-[13px] w-[13px] items-center justify-center rounded-full border border-[#bbb] bg-[#333] text-[10px] font-bold leading-none">4</span>
      </div>
    </div>
  </div>
);

export default function App() {
  return (
    <div className="flex h-[1060px] w-[1898px] flex-col overflow-hidden bg-white">
      <div className="relative flex h-[6px] items-end justify-between overflow-hidden bg-white pl-[13px]">
        <span className="mb-[-3px] whitespace-nowrap text-[12.300px] leading-[14px] text-[#333]" style={cjk}>
          ULSG WIBU - [D:\E盘\工作\享日公开课\2019公开课课程\533-女宽松露肩连帽上衣制版打版教程\533-女宽松露肩连帽上衣制版打版教程1.prj]----样板号: 001]
        </span>
        <div className="flex items-start gap-[37px] self-start pr-[8px]">
          <span className="h-[4px] w-[9px] border border-t-0 border-[#111]" />
          <svg width="10" height="5" viewBox="0 0 10 5" fill="none" stroke="#333"><path d="M1 5L5 1l4 4" /></svg>
        </div>
      </div>
      <div className="flex h-[27px] items-center justify-between border-b border-[#a0a0a0] bg-white pt-[2px]" style={cjk}>
        <div className="flex items-center">
          <div className="flex w-[21px] items-start pt-[1px]">
            <svg width="14" height="16" viewBox="0 0 14 16" fill="none">
              <path d="M0 1h11v11H4l-2 3v-3H0" stroke="#555" />
              <text x="0" y="8" fontSize="7" fontWeight="700" fill="#d01818" style={{ fontFamily: '"Liberation Sans", sans-serif' }}>ET</text>
            </svg>
          </div>
          {menus.map((m) => (
            <span key={m.label} className={`whitespace-nowrap text-[12px] text-[#222] ${m.w}`}>{m.label}</span>
          ))}
        </div>
        <div className="flex items-center pr-[6px]">
          <span className="flex h-[18px] w-[19px] items-center justify-center border border-[#ececec]"><span className="mt-[3px] h-[2px] w-[6px] bg-[#999]" /></span>
          <span className="flex h-[18px] w-[19px] items-center justify-center border border-[#ececec]"><span className="h-[6px] w-[7px] border border-t-2 border-[#666]" /></span>
        </div>
      </div>
      <Toolbar />
      <StatusBar />
      <div className="relative flex h-[920px]">
        <div className="w-[1770px] shrink-0 overflow-hidden bg-black">
          <Drawing />
        </div>
        <RightPanel />
        <PenPalette />
      </div>
      <BottomBar />
      <Taskbar />
    </div>
  );
}
